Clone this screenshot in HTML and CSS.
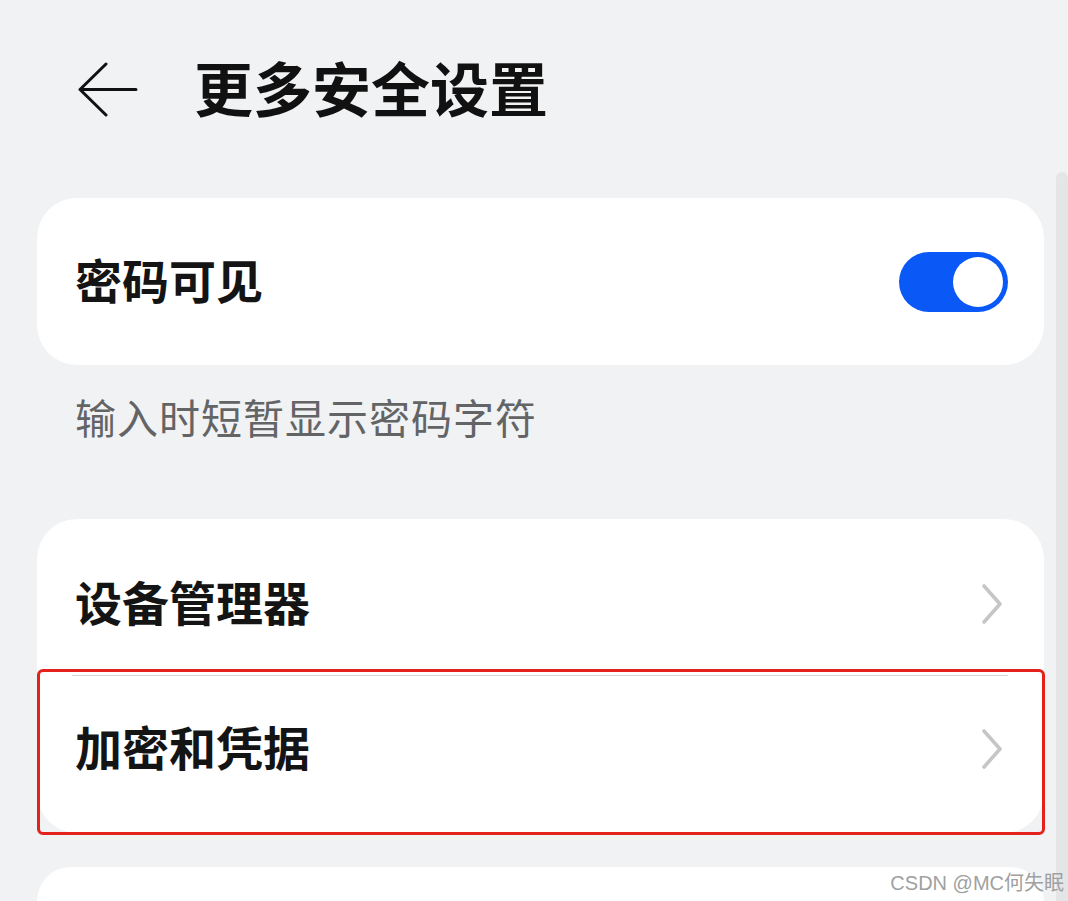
FILE: index.html
```html
<!DOCTYPE html>
<html lang="zh-CN">
<head>
<meta charset="utf-8">
<title>更多安全设置</title>
<link rel="stylesheet" href="styles.css">
</head>
<body>
<div class="page">
  <header class="header">
    <svg class="back" width="60" height="56" viewBox="0 0 60 56" aria-hidden="true">
      <path d="M28 2 L2 27.5 L28 53 M2 27.5 H58" fill="none" stroke="#111" stroke-width="3" stroke-linecap="round" stroke-linejoin="round"/>
    </svg>
    <h1 class="title">更多安全设置</h1>
  </header>

  <section class="card single">
    <span class="label">密码可见</span>
    <span class="switch"><span class="knob"></span></span>
  </section>
  <p class="caption">输入时短暂显示密码字符</p>

  <section class="card list">
    <div class="row">
      <span class="label">设备管理器</span>
      <svg class="chev" width="24" height="42" viewBox="0 0 24 42" aria-hidden="true"><path d="M4 3 L20 21 L4 39" fill="none" stroke="#c6c6c6" stroke-width="3.6" stroke-linecap="round" stroke-linejoin="round"/></svg>
    </div>
    <div class="divider"></div>
    <div class="row">
      <span class="label">加密和凭据</span>
      <svg class="chev" width="24" height="42" viewBox="0 0 24 42" aria-hidden="true"><path d="M4 3 L20 21 L4 39" fill="none" stroke="#c6c6c6" stroke-width="3.6" stroke-linecap="round" stroke-linejoin="round"/></svg>
    </div>
    <div class="highlight"></div>
  </section>

  <section class="card tail"></section>
</div>
<div class="scrollbar"></div>
<div class="watermark">CSDN @MC何失眠</div>
</body>
</html>
```
FILE: styles.css
```css
html, body {
  margin: 0;
  padding: 0;
}
body {
  width: 1068px;
  height: 901px;
  overflow: hidden;
  background: #f1f2f4;
  font-family: "Noto Sans CJK SC", "Noto Sans", sans-serif;
  position: relative;
}
.page {
  padding: 0 24px 0 37px;
}
.header {
  height: 198px;
  box-sizing: border-box;
  padding: 0 0 18px 41px;
  display: flex;
  align-items: center;
}
.back {
  display: block;
  flex: none;
}
.title {
  margin: 0 0 8px 56px;
  font-size: 59px;
  font-weight: 700;
  color: #111;
  line-height: 1;
}
.card {
  background: #fff;
  border-radius: 40px;
}
.single {
  height: 167px;
  box-sizing: border-box;
  padding: 0 36px 0 38px;
  display: flex;
  align-items: center;
  justify-content: space-between;
}
.label {
  font-size: 47px;
  font-weight: 700;
  color: #141414;
  line-height: 1;
  padding-bottom: 6px;
}
.switch {
  width: 109px;
  height: 60px;
  border-radius: 30px;
  background: #0a59f7;
  display: flex;
  align-items: center;
  justify-content: flex-end;
  padding-right: 5px;
  box-sizing: border-box;
}
.knob {
  width: 50px;
  height: 50px;
  border-radius: 50%;
  background: #fff;
}
.caption {
  margin: 0;
  height: 154px;
  box-sizing: border-box;
  padding: 25px 0 0 38px;
  font-size: 41px;
  letter-spacing: 1px;
  line-height: 53px;
  color: #636466;
}
.list {
  position: relative;
  padding: 12px 0;
}
.row {
  height: 145px;
  box-sizing: border-box;
  padding: 0 40px 0 38px;
  display: flex;
  align-items: center;
  justify-content: space-between;
}
.chev {
  display: block;
}
.divider {
  height: 1px;
  background: #d4d4d6;
  margin: -1px 36px 0 35px;
}
.highlight {
  position: absolute;
  left: 0;
  right: -1px;
  top: 150px;
  bottom: -2px;
  border: 3px solid #e3221b;
  border-radius: 6px;
}
.tail {
  margin-top: 34px;
  height: 34px;
  border-radius: 40px 40px 0 0;
}
.scrollbar {
  position: absolute;
  left: 1056px;
  right: 0;
  top: 172px;
  bottom: 0;
  background: #e4e5e7;
  border-radius: 6px 6px 0 0;
}
.watermark {
  position: absolute;
  right: 4px;
  bottom: 6px;
  font-family: "Liberation Sans", "Noto Sans CJK SC", sans-serif;
  font-size: 20px;
  color: #a0a0a0;
  line-height: 24px;
}
```
